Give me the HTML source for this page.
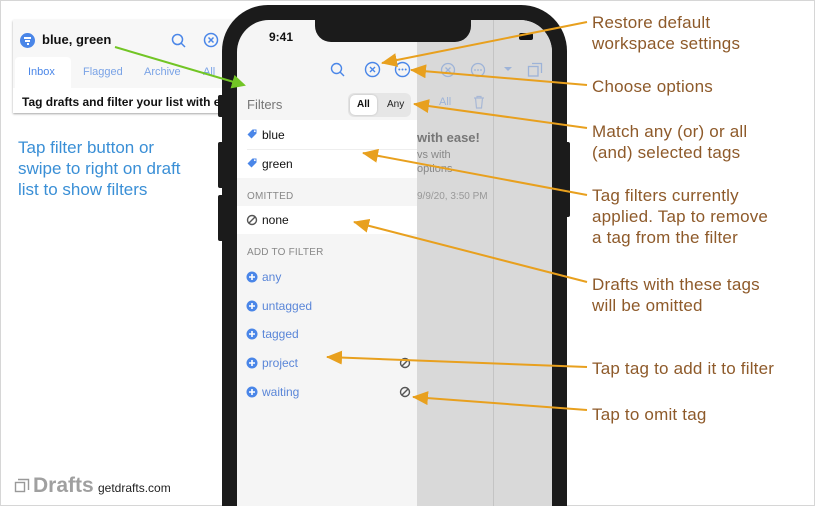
<!DOCTYPE html>
<html><head><meta charset="utf-8">
<style>
*{margin:0;padding:0;box-sizing:border-box}
html,body{width:815px;height:506px;overflow:hidden;background:#fff;font-family:"Liberation Sans",sans-serif}
#wrap{position:relative;width:815px;height:506px;overflow:hidden}
.frame{position:absolute;left:0;top:0;width:815px;height:506px;border:1px solid #d6d6d6}
.abs{position:absolute}
.note{position:absolute;left:592px;color:#8e5a2a;font-size:17px;line-height:21px;letter-spacing:0.2px}
.card{position:absolute;left:13px;top:20px;width:240px;height:93px;background:#f7f7f7;box-shadow:0 1px 2px rgba(0,0,0,.35)}
.phone{position:absolute;left:222px;top:5px;width:345px;height:501px;background:#1b1b1b;border-radius:46px 46px 0 0}
.screen{position:absolute;left:237px;top:20px;width:315px;height:486px;background:#f5f5f5;border-radius:32px 32px 0 0;overflow:hidden}
.row{position:absolute;left:0;width:180px;font-size:12px;color:#111}
.blue{color:#5a86d8}
.sec{position:absolute;left:10px;font-size:10px;color:#888;letter-spacing:.2px}
</style></head><body><div id="wrap">
<div class="frame"></div>

<div class="card">
  <div class="abs" style="left:7px;top:13px;width:15px;height:15px;border-radius:50%;background:#4a86e8"></div>
  <div class="abs" style="left:11px;top:17px;width:7px;height:1.5px;background:#fff"></div>
  <div class="abs" style="left:12px;top:20px;width:5px;height:1.5px;background:#fff"></div>
  <div class="abs" style="left:13.5px;top:23px;width:2px;height:1.5px;background:#fff"></div>
  <div class="abs" style="left:29px;top:12px;font-size:13px;font-weight:bold;color:#111">blue, green</div>
  <svg class="abs" style="left:158px;top:13px" width="16" height="16"><circle cx="6.5" cy="6.5" r="5" fill="none" stroke="#4a86e8" stroke-width="1.5"/><line x1="10" y1="10" x2="14" y2="14" stroke="#4a86e8" stroke-width="1.5"/></svg>
  <svg class="abs" style="left:190px;top:12px" width="16" height="16"><circle cx="8" cy="8" r="6.5" fill="none" stroke="#4a86e8" stroke-width="1.5"/><path d="M5.5 5.5L10.5 10.5M10.5 5.5L5.5 10.5" stroke="#4a86e8" stroke-width="1.5"/></svg>
  <div class="abs" style="left:2px;top:37px;width:56px;height:32px;background:#fff;border-radius:4px 4px 0 0"></div>
  <div class="abs" style="left:15px;top:46px;font-size:11px;color:#4a86e8">Inbox</div>
  <div class="abs" style="left:70px;top:46px;font-size:11px;color:#7aa3e6">Flagged</div>
  <div class="abs" style="left:131px;top:46px;font-size:11px;color:#7aa3e6">Archive</div>
  <div class="abs" style="left:190px;top:46px;font-size:11px;color:#7aa3e6">All</div>
  <div class="abs" style="left:0;top:68px;width:240px;height:25px;background:#fff"></div>
  <div class="abs" style="left:9px;top:75px;font-size:12px;font-weight:bold;color:#111;white-space:nowrap">Tag drafts and filter your list with ease!</div>
</div>

<div class="abs" style="left:18px;top:137px;color:#3a8fd6;font-size:17px;line-height:21px">Tap filter button or<br>swipe to right on draft<br>list to show filters</div>

<svg class="abs" style="left:14px;top:478px" width="16" height="16"><path d="M4 1.5h10.5v10.5" fill="none" stroke="#999" stroke-width="1.4"/><rect x="1.5" y="4.5" width="9" height="9" fill="none" stroke="#999" stroke-width="1.4"/></svg>
<div class="abs" style="left:33px;top:474px;font-size:21px;font-weight:bold;color:#a0a0a0">Drafts</div>
<div class="abs" style="left:98px;top:481px;font-size:12px;color:#222">getdrafts.com</div>

<div class="abs" style="left:218px;top:95px;width:6px;height:22px;background:#1b1b1b;border-radius:2px"></div>
<div class="abs" style="left:218px;top:142px;width:6px;height:46px;background:#1b1b1b;border-radius:2px"></div>
<div class="abs" style="left:218px;top:195px;width:6px;height:46px;background:#1b1b1b;border-radius:2px"></div>
<div class="abs" style="left:564px;top:142px;width:6px;height:75px;background:#1b1b1b;border-radius:2px"></div>
<div class="phone"></div>
<div class="screen">
  <div class="abs" style="left:180px;top:0;width:135px;height:486px;background:#d9d9d9"></div>
  <div class="abs" style="left:256px;top:0;width:1px;height:486px;background:#c4c4c4"></div>
  <svg class="abs" style="left:203px;top:42px" width="16" height="16"><circle cx="8" cy="8" r="6.5" fill="none" stroke="#9db3d8" stroke-width="1.3"/><path d="M5.5 5.5L10.5 10.5M10.5 5.5L5.5 10.5" stroke="#9db3d8" stroke-width="1.3"/></svg>
  <svg class="abs" style="left:233px;top:42px" width="16" height="16"><circle cx="8" cy="8" r="6.5" fill="none" stroke="#9db3d8" stroke-width="1.3"/><circle cx="5" cy="8" r=".9" fill="#9db3d8"/><circle cx="8" cy="8" r=".9" fill="#9db3d8"/><circle cx="11" cy="8" r=".9" fill="#9db3d8"/></svg>
  <svg class="abs" style="left:266px;top:46px" width="10" height="8"><path d="M1 1h8l-4 4z" fill="#9db3d8"/></svg>
  <svg class="abs" style="left:290px;top:42px" width="16" height="16"><path d="M5 1.5h9.5v9.5" fill="none" stroke="#9db3d8" stroke-width="1.3"/><rect x="1.5" y="4.5" width="9.5" height="9.5" fill="none" stroke="#9db3d8" stroke-width="1.3"/></svg>
  <div class="abs" style="left:202px;top:76px;font-size:11px;color:#9db3d8">All</div>
  <svg class="abs" style="left:236px;top:75px" width="12" height="14"><path d="M1 3h10M4 3V1.5h4V3M2.5 3l1 10h5l1-10" fill="none" stroke="#a8b8d6" stroke-width="1.2"/></svg>
  <div class="abs" style="left:180px;top:110px;font-size:13px;font-weight:bold;color:#777">with ease!</div>
  <div class="abs" style="left:180px;top:128px;font-size:11px;color:#888;line-height:14px">vs with<br>options</div>
  <div class="abs" style="left:180px;top:171px;font-size:10px;color:#999">9/9/20, 3:50 PM</div>
  <div class="abs" style="left:78px;top:-1px;width:156px;height:23px;background:#1b1b1b;border-radius:0 0 16px 16px"></div>
  <div class="abs" style="left:32px;top:10px;font-size:12px;font-weight:bold;color:#111">9:41</div>
  <div class="abs" style="left:282px;top:13px;width:14px;height:7px;background:#111;border-radius:2px"></div>
  <svg class="abs" style="left:93px;top:42px" width="16" height="16"><circle cx="6.5" cy="6.5" r="5" fill="none" stroke="#4a86e8" stroke-width="1.4"/><line x1="10" y1="10" x2="14" y2="14" stroke="#4a86e8" stroke-width="1.4"/></svg>
  <svg class="abs" style="left:127px;top:41px" width="17" height="17"><circle cx="8.5" cy="8.5" r="7" fill="none" stroke="#4a86e8" stroke-width="1.4"/><path d="M6 6L11 11M11 6L6 11" stroke="#4a86e8" stroke-width="1.4"/></svg>
  <svg class="abs" style="left:157px;top:41px" width="17" height="17"><circle cx="8.5" cy="8.5" r="7" fill="none" stroke="#4a86e8" stroke-width="1.4"/><circle cx="5.3" cy="8.5" r="1" fill="#4a86e8"/><circle cx="8.5" cy="8.5" r="1" fill="#4a86e8"/><circle cx="11.7" cy="8.5" r="1" fill="#4a86e8"/></svg>
  <div class="abs" style="left:10px;top:77px;font-size:13px;color:#777">Filters</div>
  <div class="abs" style="left:111px;top:73px;width:63px;height:24px;background:#e6e6e6;border-radius:6px"></div>
  <div class="abs" style="left:113px;top:75px;width:27px;height:20px;background:#fff;border-radius:5px;box-shadow:0 0 2px rgba(0,0,0,.2)"></div>
  <div class="abs" style="left:120px;top:79px;font-size:10px;font-weight:bold;color:#111">All</div>
  <div class="abs" style="left:150px;top:79px;font-size:10px;color:#222">Any</div>
  <div class="abs" style="left:0;top:100px;width:180px;height:58px;background:#fff"></div>
  <div class="abs" style="left:10px;top:129px;width:170px;height:1px;background:#eee"></div>
  <svg class="abs" style="left:10px;top:108px" width="11" height="11"><path d="M5.5 1.5h4v4l-5 5-4-4z" fill="#4a86e8"/><circle cx="7.8" cy="3.2" r=".9" fill="#fff"/></svg>
  <div class="row" style="left:25px;top:108px">blue</div>
  <svg class="abs" style="left:10px;top:137px" width="11" height="11"><path d="M5.5 1.5h4v4l-5 5-4-4z" fill="#4a86e8"/><circle cx="7.8" cy="3.2" r=".9" fill="#fff"/></svg>
  <div class="row" style="left:25px;top:137px">green</div>
  <div class="sec" style="top:171px">OMITTED</div>
  <div class="abs" style="left:0;top:186px;width:180px;height:28px;background:#fff"></div>
  <svg class="abs" style="left:9px;top:194px" width="12" height="12"><circle cx="6" cy="6" r="4.5" fill="none" stroke="#555" stroke-width="1.4"/><line x1="3" y1="9" x2="9" y2="3" stroke="#555" stroke-width="1.4"/></svg>
  <div class="row" style="left:25px;top:193px">none</div>
  <div class="sec" style="top:227px">ADD TO FILTER</div>
  <svg class="abs" style="left:9px;top:251px" width="12" height="12"><circle cx="6" cy="6" r="5.5" fill="#4a86e8"/><path d="M6 3v6M3 6h6" stroke="#fff" stroke-width="1.6"/></svg>
  <div class="row blue" style="left:25px;top:250px">any</div>
  <svg class="abs" style="left:9px;top:280px" width="12" height="12"><circle cx="6" cy="6" r="5.5" fill="#4a86e8"/><path d="M6 3v6M3 6h6" stroke="#fff" stroke-width="1.6"/></svg>
  <div class="row blue" style="left:25px;top:279px">untagged</div>
  <svg class="abs" style="left:9px;top:308px" width="12" height="12"><circle cx="6" cy="6" r="5.5" fill="#4a86e8"/><path d="M6 3v6M3 6h6" stroke="#fff" stroke-width="1.6"/></svg>
  <div class="row blue" style="left:25px;top:307px">tagged</div>
  <svg class="abs" style="left:9px;top:337px" width="12" height="12"><circle cx="6" cy="6" r="5.5" fill="#4a86e8"/><path d="M6 3v6M3 6h6" stroke="#fff" stroke-width="1.6"/></svg>
  <div class="row blue" style="left:25px;top:336px">project</div>
  <svg class="abs" style="left:162px;top:337px" width="12" height="12"><circle cx="6" cy="6" r="4.5" fill="none" stroke="#555" stroke-width="1.4"/><line x1="3" y1="9" x2="9" y2="3" stroke="#555" stroke-width="1.4"/></svg>
  <svg class="abs" style="left:9px;top:366px" width="12" height="12"><circle cx="6" cy="6" r="5.5" fill="#4a86e8"/><path d="M6 3v6M3 6h6" stroke="#fff" stroke-width="1.6"/></svg>
  <div class="row blue" style="left:25px;top:365px">waiting</div>
  <svg class="abs" style="left:162px;top:366px" width="12" height="12"><circle cx="6" cy="6" r="4.5" fill="none" stroke="#555" stroke-width="1.4"/><line x1="3" y1="9" x2="9" y2="3" stroke="#555" stroke-width="1.4"/></svg>
</div>

<div class="note" style="top:12px">Restore default<br>workspace settings</div>
<div class="note" style="top:76px">Choose options</div>
<div class="note" style="top:121px">Match any (or) or all<br>(and) selected tags</div>
<div class="note" style="top:185px">Tag filters currently<br>applied. Tap to remove<br>a tag from the filter</div>
<div class="note" style="top:274px">Drafts with these tags<br>will be omitted</div>
<div class="note" style="top:358px">Tap tag to add it to filter</div>
<div class="note" style="top:404px">Tap to omit tag</div>

<svg class="abs" style="left:0;top:0" width="815" height="506">
<defs>
<marker id="g" markerWidth="14" markerHeight="14" refX="12" refY="7" orient="auto" markerUnits="userSpaceOnUse"><path d="M0 0L14 7L0 14z" fill="#72c525"/></marker>
<marker id="h" markerWidth="16" markerHeight="14" refX="15" refY="7" orient="auto" markerUnits="userSpaceOnUse"><path d="M0 0L16 7L0 14z" fill="#e8a01e"/></marker>
</defs>
<g stroke="#e8a01e" stroke-width="2" fill="none">
<line x1="587" y1="22" x2="382" y2="63" marker-end="url(#h)"/>
<line x1="587" y1="85" x2="411" y2="70" marker-end="url(#h)"/>
<line x1="587" y1="128" x2="414" y2="104" marker-end="url(#h)"/>
<line x1="587" y1="195" x2="363" y2="153" marker-end="url(#h)"/>
<line x1="587" y1="282" x2="354" y2="222" marker-end="url(#h)"/>
<line x1="587" y1="367" x2="327" y2="357" marker-end="url(#h)"/>
<line x1="587" y1="410" x2="413" y2="397" marker-end="url(#h)"/>
</g>
<line x1="115" y1="47" x2="244" y2="85" stroke="#72c525" stroke-width="2" marker-end="url(#g)"/>
</svg>
</div></body></html>
